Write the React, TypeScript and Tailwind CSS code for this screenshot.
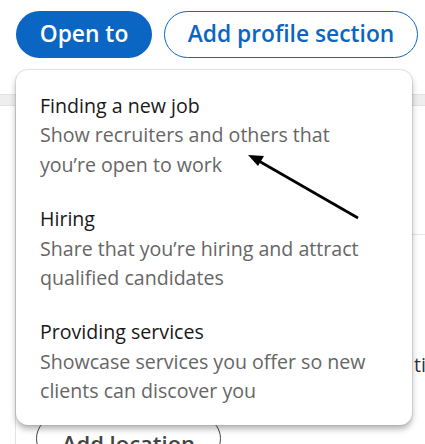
import React from "react";

const items = [
  { title: "Finding a new job", desc: ["Show recruiters and others that", "you\u2019re open to work"] },
  { title: "Hiring", desc: ["Share that you\u2019re hiring and attract", "qualified candidates"] },
  { title: "Providing services", desc: ["Showcase services you offer so new", "clients can discover you"] },
];

export default function App() {
  return (
    <div
      className="relative w-[425px] h-[444px] overflow-hidden bg-white"
      style={{ fontFamily: '"Open Sans", "Noto Sans", Arial, sans-serif' }}
    >
      {/* background page */}
      <div className="h-[94px] pt-[11px] pl-[16px] flex gap-[12px] items-start">
        <div className="w-[136px] h-[47px] rounded-full bg-[#0a66c2] text-white font-semibold text-[22.8px] flex items-center justify-center">
          Open to
        </div>
        <div className="w-[254px] h-[47px] rounded-full border-[1.5px] border-[#0a66c2] text-[#0a66c2] font-semibold text-[22.8px] flex items-center justify-center">
          Add profile section
        </div>
      </div>
      <div className="h-[12px] bg-[#eeeeee] border-y border-[#e2e2e2]" />
      <div className="border-l border-[#e4e4e4] ml-[15px] h-[338px] flex flex-col">
        <div className="mt-[128px] border-t border-[#e6e6e6]" />
        <div className="mt-[115px] pl-[398px] whitespace-nowrap text-[19.6px] leading-[29px] text-[#333]">
          tion
        </div>
        <div className="mt-[37px] ml-[20px] w-[185px] h-[47px] rounded-full border-[1.5px] border-[#444] text-[#444] font-semibold text-[22px] flex items-start justify-center pt-[10px]">
          Add location
        </div>
      </div>

      {/* dropdown */}
      <div className="absolute left-[16px] top-[70px] w-[396px] h-[355px] rounded-[12px] bg-white pt-[8.5px] pb-[6px] shadow-[0_0_0_1px_rgba(140,140,140,0.2),0_4px_6px_rgba(0,0,0,0.3)]">
        {items.map((it) => (
          <div key={it.title} className="px-[24px] py-[12.5px] text-[19.6px] leading-[29.4px]">
            <div className="text-[#191919]">{it.title}</div>
            {it.desc.map((d) => (
              <div key={d} className="text-[#666666]">{d}</div>
            ))}
          </div>
        ))}
      </div>

      {/* arrow annotation */}
      <svg className="absolute left-0 top-0" width="425" height="444" viewBox="0 0 425 444">
        <line x1="358" y1="218" x2="258" y2="160.5" stroke="#000" strokeWidth="2.6" />
        <polygon points="248,155 264,156 258,166" fill="#000" />
      </svg>
    </div>
  );
}
